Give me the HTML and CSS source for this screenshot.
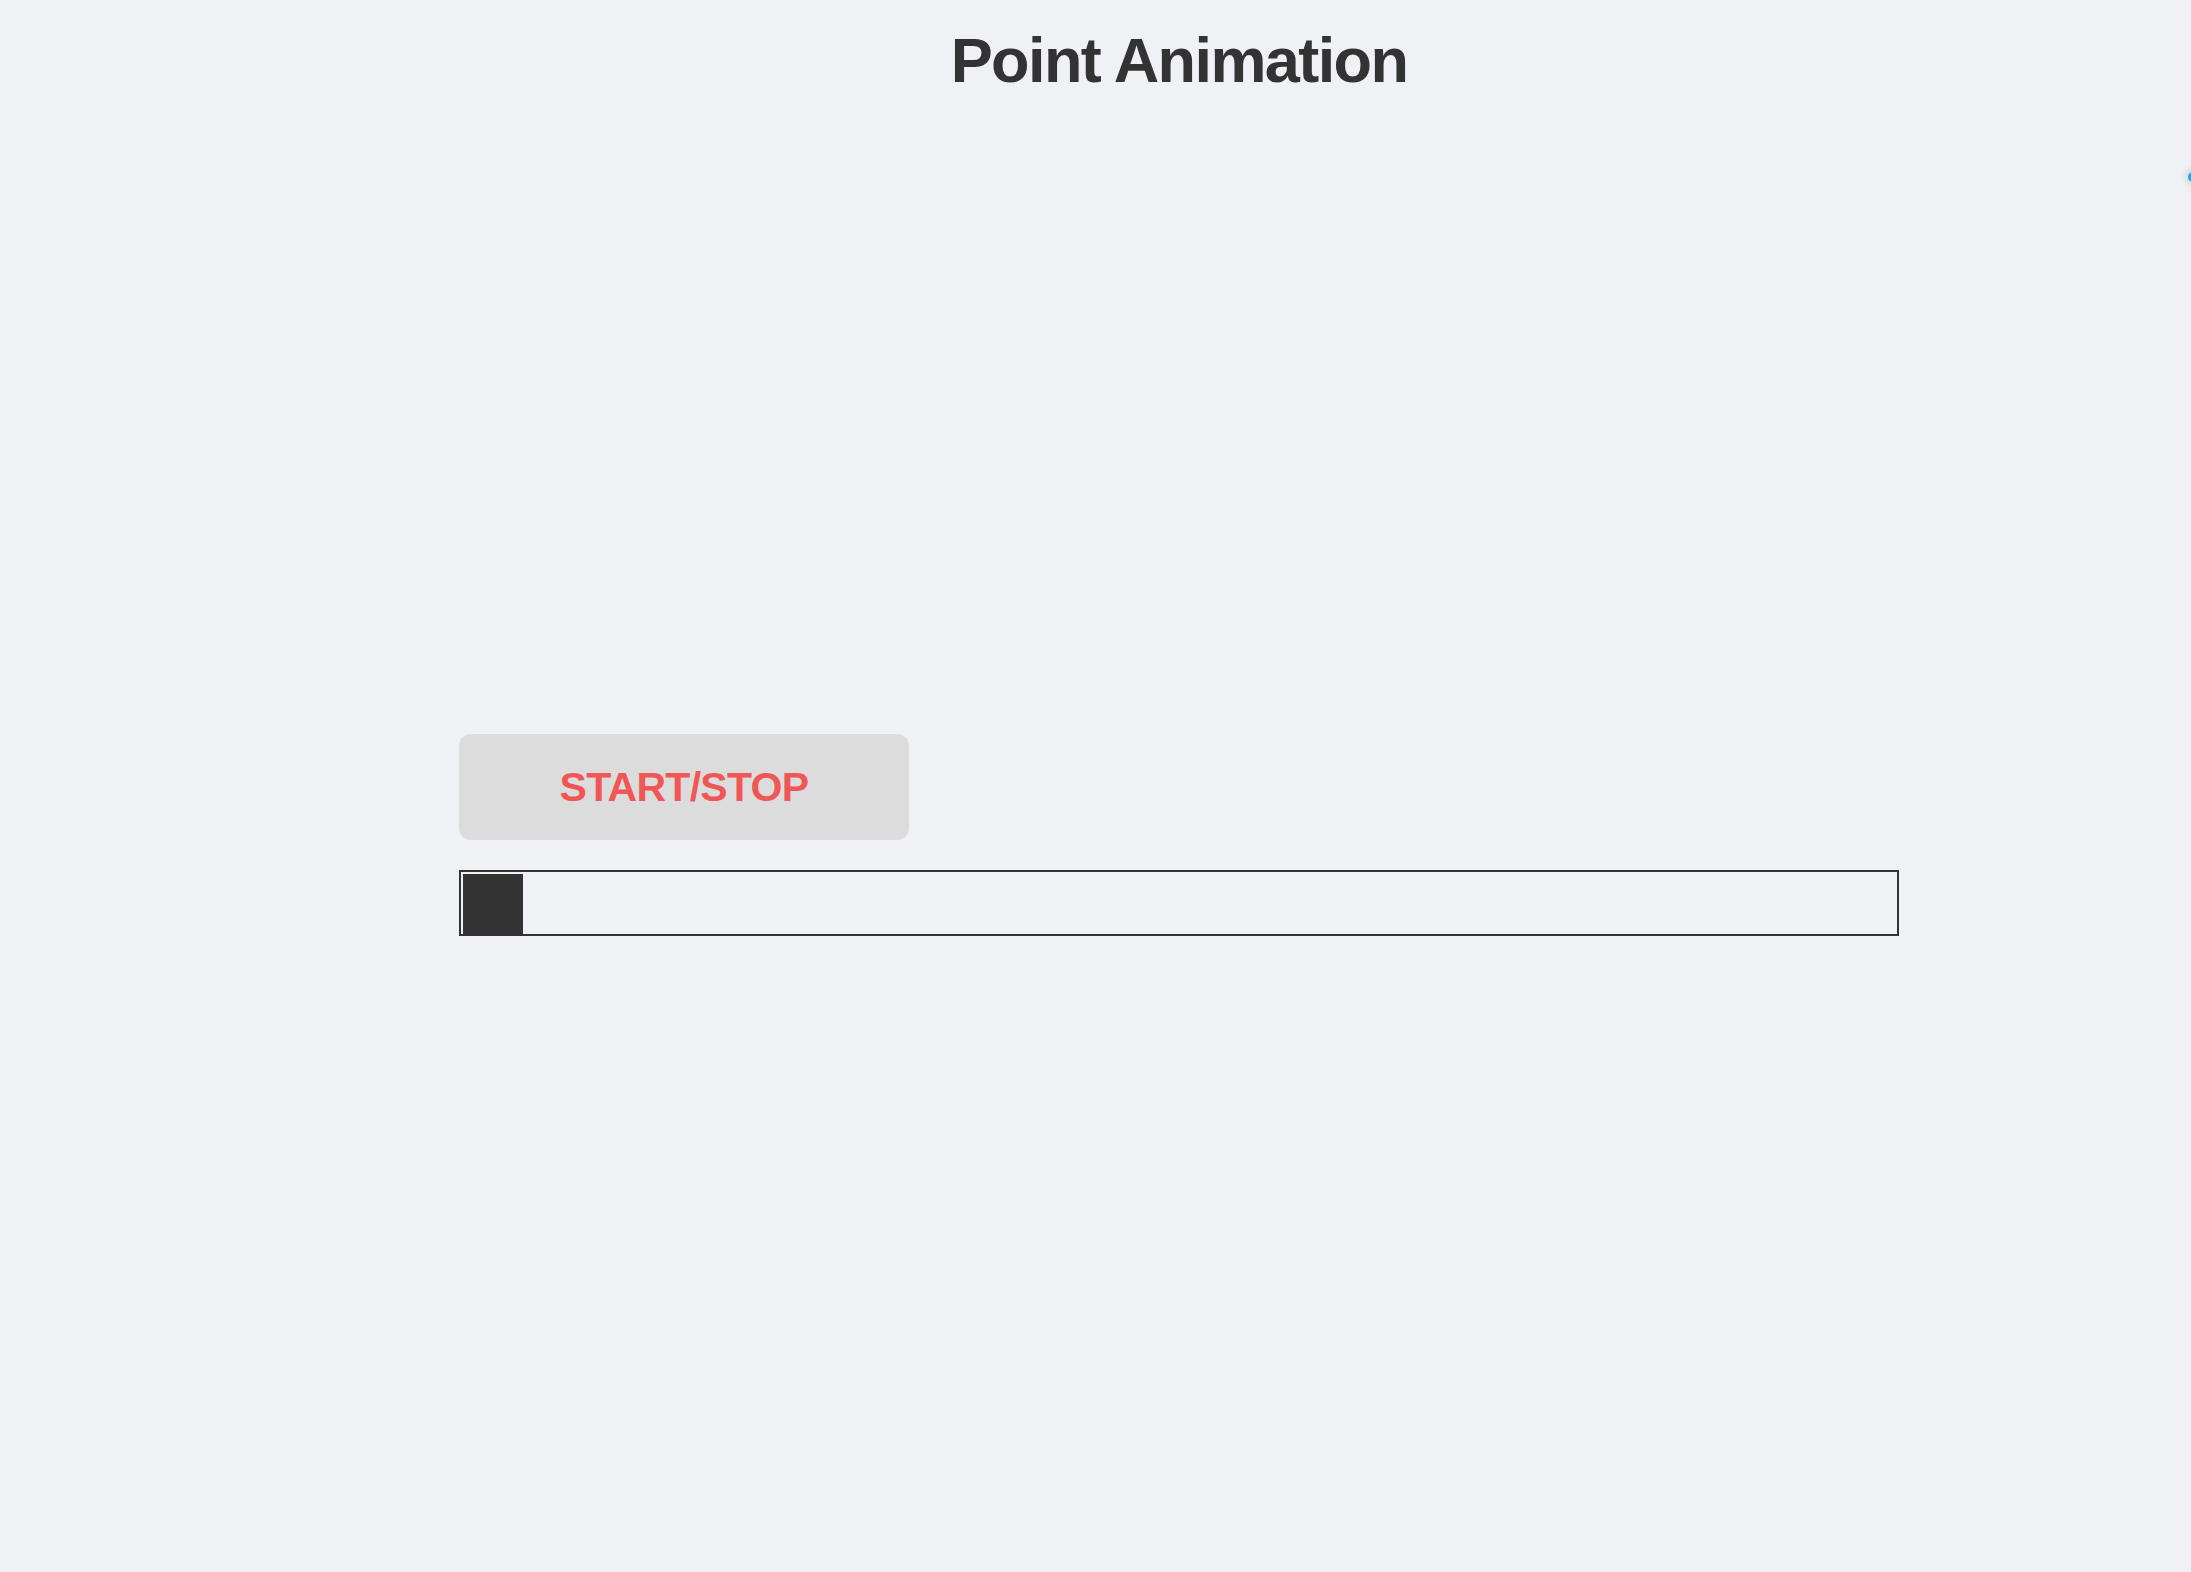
FILE: index.html
```html
<!DOCTYPE html>
<html lang="en">
<head>
<meta charset="utf-8">
<title>Point Animation</title>
<link rel="stylesheet" href="styles.css">
</head>
<body>
  <header class="column">
    <h1 class="title">Point Animation</h1>
  </header>
  <div class="stage">
    <span class="point"></span>
  </div>
  <main class="column controls">
    <button class="toggle" type="button">START/STOP</button>
    <div class="track">
      <div class="knob"></div>
    </div>
  </main>
</body>
</html>
```
FILE: styles.css
```css
html, body {
  margin: 0;
  padding: 0;
}
body {
  background: #f0f1f5;
  font-family: "Liberation Sans", Arial, Helvetica, sans-serif;
  color: #333333;
  width: 2191px;
  height: 1572px;
  overflow: hidden;
}
.column {
  box-sizing: content-box;
  width: 1440px;
  padding-left: 459px;
}
.title {
  margin: 0;
  padding-top: 29px;
  font-size: 63px;
  line-height: 63px;
  font-weight: bold;
  letter-spacing: -1.6px;
  text-align: center;
  color: #333333;
}
.stage {
  position: relative;
  height: 642px;
}
.point {
  position: absolute;
  left: 2188px;
  top: 80px;
  width: 10px;
  height: 10px;
  border-radius: 50%;
  background: #14a8f0;
  box-shadow: 0 0 8px 2px rgba(0, 0, 0, 0.15);
}
.controls {
  display: flex;
  flex-direction: column;
  align-items: flex-start;
  gap: 30px;
}
.toggle {
  width: 450px;
  height: 106px;
  border: none;
  border-radius: 12px;
  background: #dcdcdc;
  color: #f05656;
  font-family: "Liberation Sans", Arial, Helvetica, sans-serif;
  font-weight: bold;
  font-size: 41px;
  letter-spacing: -0.7px;
  padding: 0;
  cursor: pointer;
}
.track {
  box-sizing: border-box;
  width: 1440px;
  height: 66px;
  border: 2px solid #333333;
  padding: 2px 0 0 2px;
}
.knob {
  width: 60px;
  height: 60px;
  background: #333333;
}
```
